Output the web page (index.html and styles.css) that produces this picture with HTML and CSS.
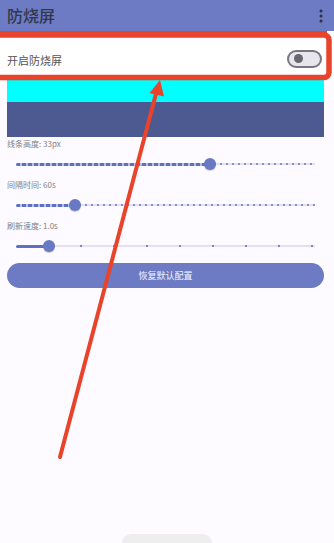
FILE: index.html
```html
<!DOCTYPE html>
<html lang="zh">
<head>
<meta charset="utf-8">
<title>防烧屏</title>
<link rel="stylesheet" href="styles.css">
</head>
<body>
<div class="page">
  <header class="appbar">
    <span class="title">防烧屏</span>
    <svg class="more" width="4" height="14" viewBox="0 0 4 14"><circle cx="2" cy="2" r="1.5"/><circle cx="2" cy="7" r="1.5"/><circle cx="2" cy="12" r="1.5"/></svg>
  </header>
  <div class="row">
    <span class="row-label">开启防烧屏</span>
    <span class="switch"><span class="switch-thumb"></span></span>
  </div>
  <div class="preview">
    <div class="band-cyan"></div>
    <div class="band-dark"></div>
  </div>
  <div class="label first">线条高度: 33px</div>
  <div class="slider">
    <div class="track">
      <div class="active fine" style="width:194px"></div>
      <div class="inactive fine"></div>
    </div>
    <span class="thumb" style="left:194px"></span>
  </div>
  <div class="label">间隔时间: 60s</div>
  <div class="slider">
    <div class="track">
      <div class="active fine" style="width:59px"></div>
      <div class="inactive fine"></div>
    </div>
    <span class="thumb" style="left:59px"></span>
  </div>
  <div class="label">刷新速度: 1.0s</div>
  <div class="slider">
    <div class="track">
      <div class="active coarse" style="width:33px"></div>
      <div class="inactive coarse"></div>
    </div>
    <span class="thumb" style="left:33px"></span>
  </div>
  <button class="reset">恢复默认配置</button>
  <div class="handle"></div>

  <svg class="annot" width="334" height="543" viewBox="0 0 334 543">
    <path d="M-3 35 H324 A5 5 0 0 1 329 40 V72 A5 5 0 0 1 324 77.5 H-3" fill="none" stroke="#e9432b" stroke-width="5.5"/>
    <rect x="-3" y="31" width="330" height="6" fill="#e9432b"/>
    <line x1="60" y1="457" x2="157" y2="90" stroke="#e9432b" stroke-width="4" stroke-linecap="round"/>
    <polygon points="160,80 149.6,93 164,96.5" fill="#e9432b"/>
  </svg>
</div>
</body>
</html>
```
FILE: styles.css
```css
html, body {
  margin: 0;
  padding: 0;
}
body {
  background: #fdfbff;
  font-family: "Noto Sans CJK SC", "Noto Sans", sans-serif;
}
.page {
  position: relative;
  width: 334px;
  height: 543px;
  overflow: hidden;
  display: flex;
  flex-direction: column;
}
.appbar {
  height: 31px;
  flex: none;
  background: #6c7bc4;
  display: flex;
  align-items: center;
  justify-content: space-between;
  padding: 0 11px 0 7px;
}
.title {
  font-size: 16px;
  font-weight: 500;
  color: #33364a;
  line-height: 20px;
  margin-top: -1px;
}
.more {
  fill: #2f3040;
}
.row {
  height: 49px;
  flex: none;
  box-sizing: border-box;
  padding: 8px 12px 0 7px;
  background: #fff;
  display: flex;
  align-items: center;
  justify-content: space-between;
}
.row-label {
  font-size: 11px;
  color: #555;
}
.switch {
  width: 26px;
  height: 14px;
  border: 2px solid #78767f;
  border-radius: 10px;
  background: #e7e5ee;
  display: flex;
  align-items: center;
  padding-left: 5px;
  margin-top: -2px;
}
.switch-thumb {
  width: 9px;
  height: 9px;
  border-radius: 50%;
  background: #68666f;
}
.preview {
  margin: 0 10px 0 7px;
  flex: none;
}
.band-cyan {
  height: 22px;
  background: #00ffff;
}
.band-dark {
  height: 35px;
  background: #4d5a92;
}
.label {
  font-size: 8px;
  line-height: 12px;
  color: #808086;
  padding-left: 7px;
  margin-top: 1px;
  flex: none;
}
.slider {
  position: relative;
  height: 28px;
  margin: 0 19px 0 16px;
  display: flex;
  align-items: center;
  flex: none;
}
.track {
  width: 100%;
  display: flex;
  align-items: center;
}
.active {
  height: 3px;
  border-radius: 2px 0 0 2px;
  background-color: #6070c0;
}
.active.fine {
  background-image: repeating-linear-gradient(90deg, #6070c0 0 4px, #b9c0e8 4px 6px);
}
.inactive {
  flex: 1;
  height: 2px;
  background-color: #e2e0f2;
}
.inactive.fine {
  background-image: repeating-linear-gradient(90deg, #e2e0f2 0 4px, #8490d0 4px 6px);
}
.inactive.coarse {
  background-image: repeating-linear-gradient(90deg, #e2e0f2 0 31.5px, #7c88cc 31.5px 33px);
}
.thumb {
  position: absolute;
  top: 8px;
  width: 12px;
  height: 12px;
  margin-left: -6px;
  border-radius: 50%;
  background: #6a79c4;
  box-shadow: 0 1px 1px rgba(0,0,0,0.2);
}
.reset {
  margin: 3px 10px 0 7px;
  height: 25px;
  flex: none;
  border: none;
  border-radius: 13px;
  background: #6c7bc4;
  color: #f4f4ff;
  font-family: "Noto Sans CJK SC", "Noto Sans", sans-serif;
  font-size: 9px;
  padding: 0;
}
.handle {
  margin: auto auto 0;
  width: 90px;
  height: 9px;
  border-radius: 9px 9px 0 0;
  background: #eeeeee;
  flex: none;
}
.annot {
  position: absolute;
  left: 0;
  top: 0;
  pointer-events: none;
}
```
